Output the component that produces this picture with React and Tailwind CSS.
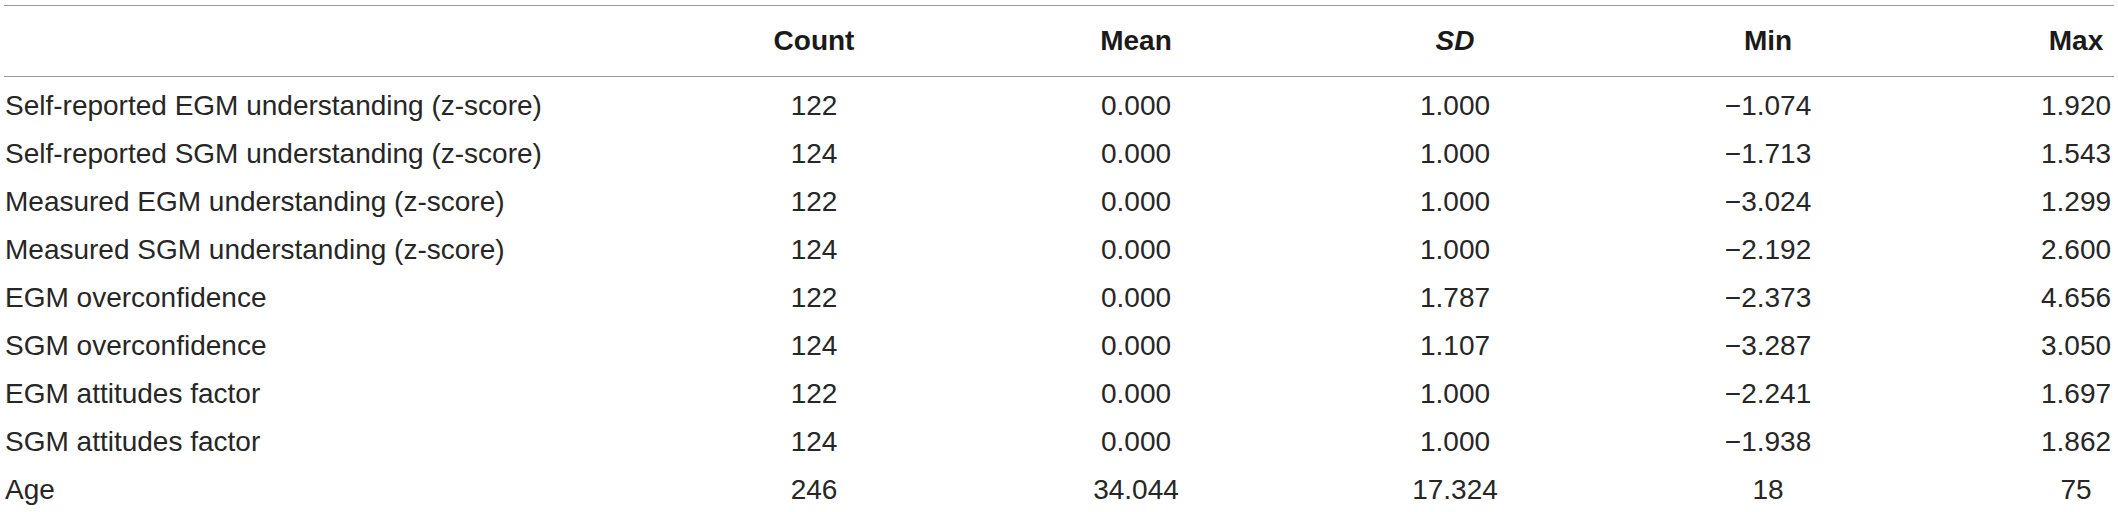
const rows = [
  ["Self-reported EGM understanding (z-score)", "122", "0.000", "1.000", "\u22121.074", "1.920"],
  ["Self-reported SGM understanding (z-score)", "124", "0.000", "1.000", "\u22121.713", "1.543"],
  ["Measured EGM understanding (z-score)", "122", "0.000", "1.000", "\u22123.024", "1.299"],
  ["Measured SGM understanding (z-score)", "124", "0.000", "1.000", "\u22122.192", "2.600"],
  ["EGM overconfidence", "122", "0.000", "1.787", "\u22122.373", "4.656"],
  ["SGM overconfidence", "124", "0.000", "1.107", "\u22123.287", "3.050"],
  ["EGM attitudes factor", "122", "0.000", "1.000", "\u22122.241", "1.697"],
  ["SGM attitudes factor", "124", "0.000", "1.000", "\u22121.938", "1.862"],
  ["Age", "246", "34.044", "17.324", "18", "75"],
];

const grid = "grid grid-cols-[648px_324px_320px_318px_308px_1fr]";

const App = () => {
  return (
    <div className="w-[2118px] h-[512px] bg-white overflow-hidden pt-[5px] px-[4px] text-[28px] text-[#262626] font-['Liberation_Sans',Arial,sans-serif]">
      {/* header */}
      <div className={`${grid} h-[72px] items-center border-t border-b border-[#9a9a9a] font-bold text-[#1a1a1a]`}>
        <div></div>
        <div className="text-center">Count</div>
        <div className="text-center">Mean</div>
        <div className="text-center italic">SD</div>
        <div className="text-center">Min</div>
        <div className="pl-[116px] text-center">Max</div>
      </div>

      {/* body */}
      <div className="pt-[5px]">
        {rows.map((r) => (
          <div key={r[0]} className={`${grid} h-[48px] items-center`}>
            <div className="pl-[1px] whitespace-nowrap">{r[0]}</div>
            <div className="text-center">{r[1]}</div>
            <div className="text-center">{r[2]}</div>
            <div className="text-center">{r[3]}</div>
            <div className="text-center">{r[4]}</div>
            <div className="pl-[116px] text-center">{r[5]}</div>
          </div>
        ))}
      </div>
    </div>
  );
};

export default App;
